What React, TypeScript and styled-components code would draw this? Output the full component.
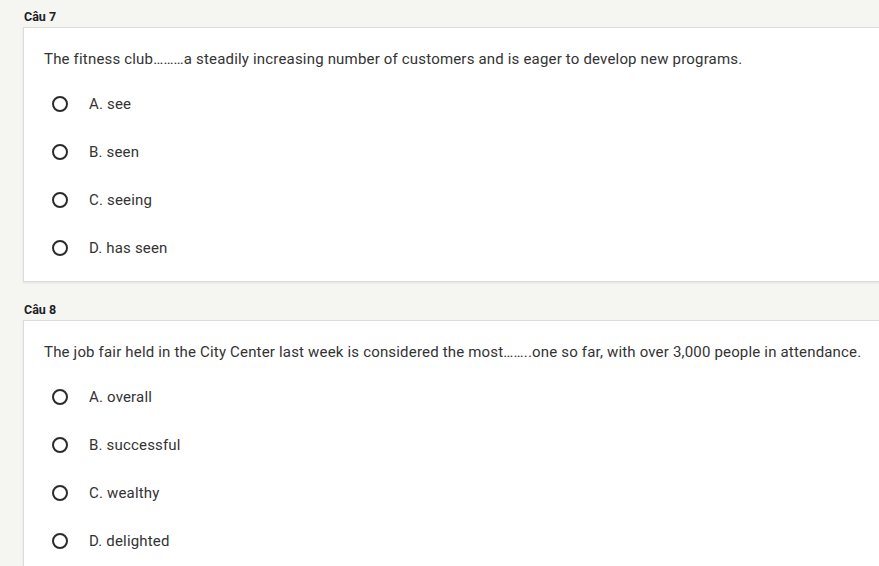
import React from "react";
import styled, { createGlobalStyle } from "styled-components";

const Global = createGlobalStyle`
  html, body { margin: 0; padding: 0; background: #f5f5f2; overflow: hidden; }
  body { font-family: Roboto, "Noto Sans", Arial, sans-serif; color: #333; }
`;

const Page = styled.div`
  display: flex;
  flex-direction: column;
  padding: 10px 0 0 23px;
  width: 960px;
`;

const Section = styled.section<{ $gap?: number }>`
  display: flex;
  flex-direction: column;
  margin-top: ${(p) => p.$gap ?? 0}px;
`;

const Label = styled.div`
  font-size: 12.5px;
  font-weight: 700;
  line-height: 14px;
  color: #202124;
  padding-left: 1px;
  margin-bottom: 3px;
`;

const Card = styled.div`
  background: #fff;
  border: 1px solid #dcdcdc;
  box-shadow: 0 1px 2px rgba(0, 0, 0, 0.08);
  padding: 21px 20px 9px 20px;
  display: flex;
  flex-direction: column;
`;

const Question = styled.div`
  font-size: 15px;
  letter-spacing: 0.18px;
  line-height: 20px;
  color: #333;
  margin-bottom: 11px;
`;

const Option = styled.label`
  display: flex;
  align-items: center;
  height: 48px;
  padding-left: 8px;
  font-size: 15px;
  letter-spacing: 0.18px;
  color: #333;
`;

const Radio = styled.span`
  box-sizing: border-box;
  width: 16px;
  height: 16px;
  border: 2px solid #2b2b2b;
  border-radius: 50%;
  margin-right: 21px;
  flex: none;
`;

const data = [
  {
    label: "Câu 7",
    q: "The fitness club………a steadily increasing number of customers and is eager to develop new programs.",
    opts: ["A. see", "B. seen", "C. seeing", "D. has seen"],
  },
  {
    label: "Câu 8",
    q: "The job fair held in the City Center last week is considered the most……..one so far, with over 3,000 people in attendance.",
    opts: ["A. overall", "B. successful", "C. wealthy", "D. delighted"],
  },
];

export default function App() {
  return (
    <>
      <Global />
      <Page>
        {data.map((d, i) => (
          <Section key={d.label} $gap={i === 0 ? 0 : 21}>
            <Label>{d.label}</Label>
            <Card>
              <Question>{d.q}</Question>
              {d.opts.map((o) => (
                <Option key={o}>
                  <Radio />
                  {o}
                </Option>
              ))}
            </Card>
          </Section>
        ))}
      </Page>
    </>
  );
}
